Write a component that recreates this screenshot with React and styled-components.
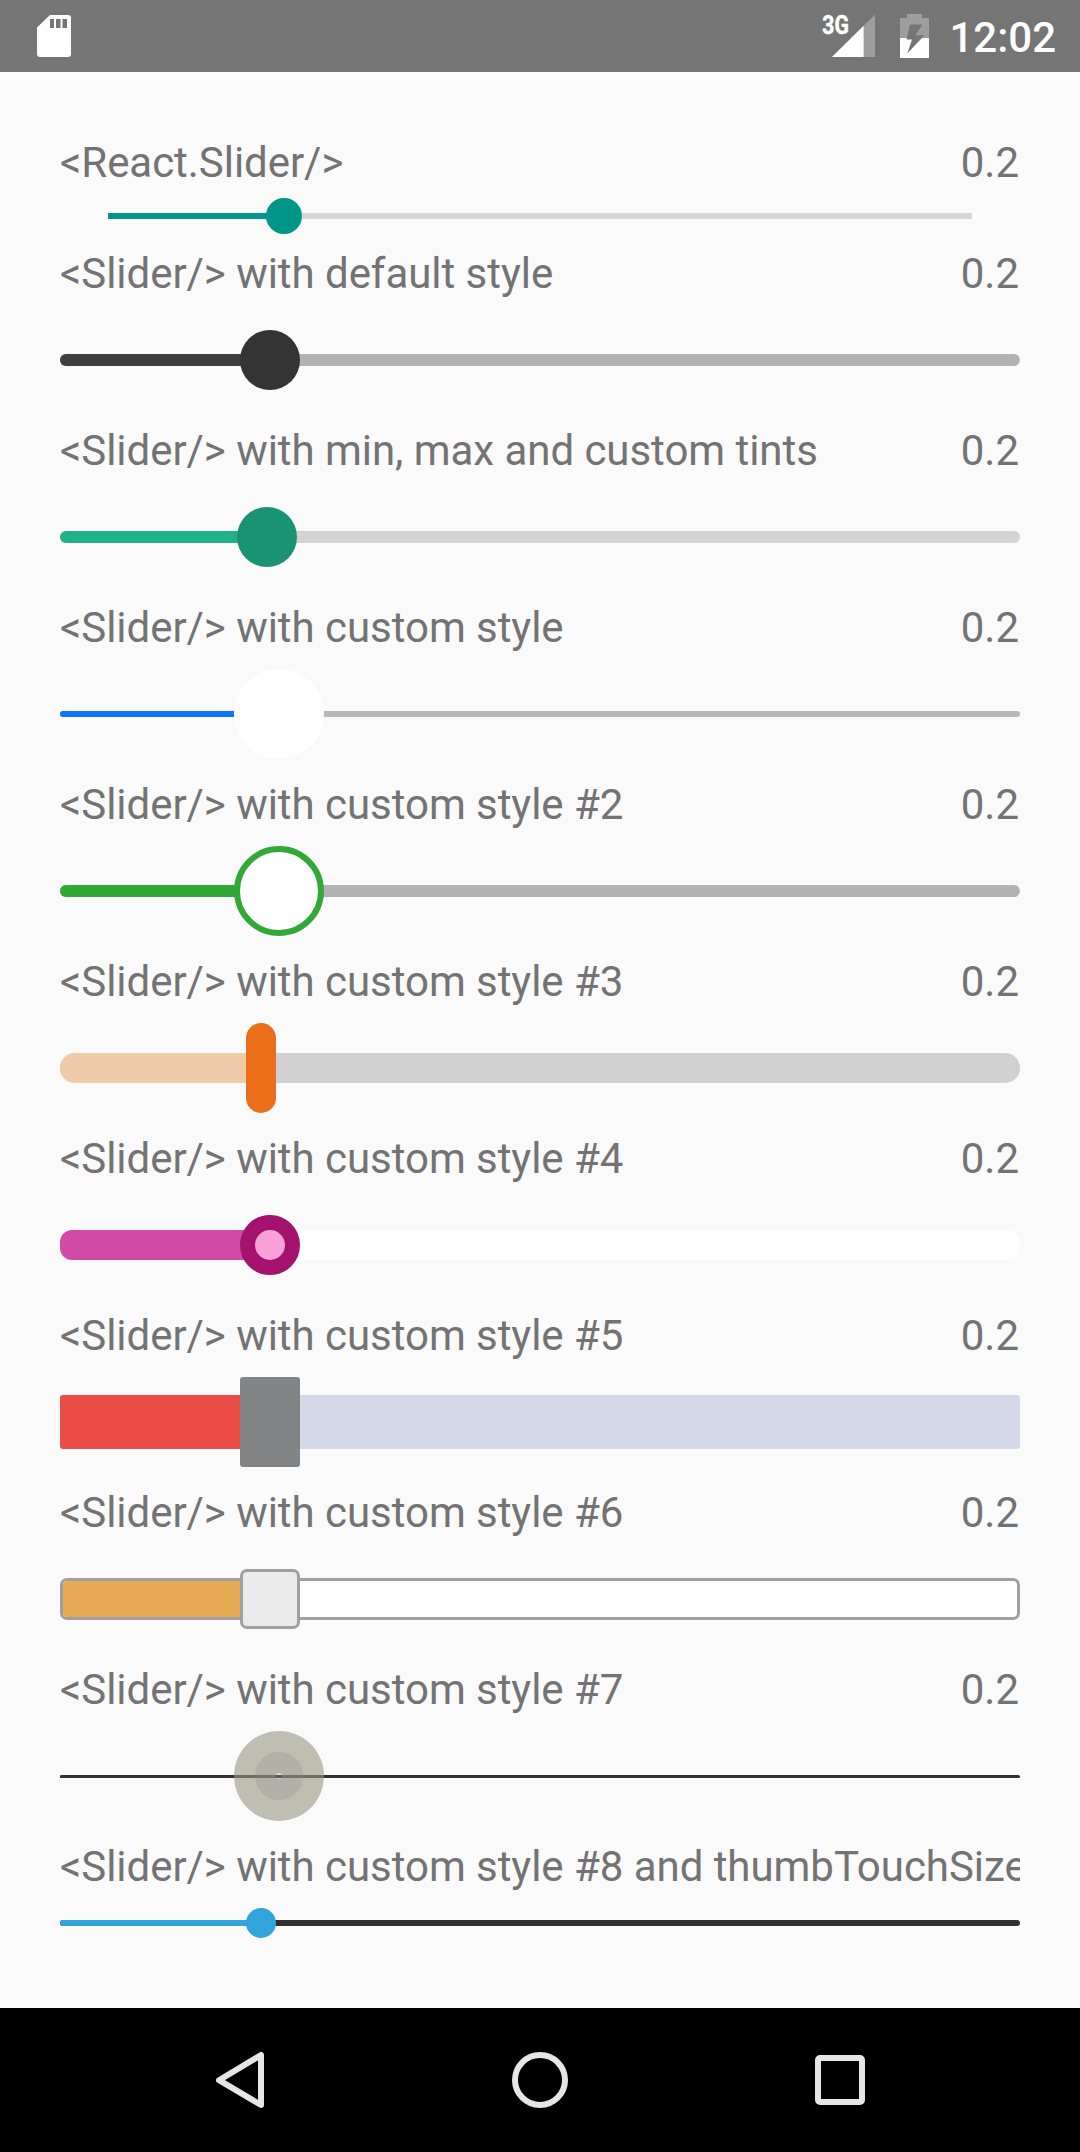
import React from 'react';
import styled, { createGlobalStyle } from 'styled-components';

const GlobalStyle = createGlobalStyle`
  *, *::before, *::after { box-sizing: border-box; }
  body {
    margin: 0;
    background: #fafafa;
    font-family: Roboto, 'Liberation Sans', sans-serif;
  }
`;

const Screen = styled.div`
  display: flex;
  flex-direction: column;
  width: 1080px;
  height: 2152px;
  background: #fafafa;
  overflow: hidden;
`;

const StatusBar = styled.header`
  display: flex;
  align-items: center;
  height: 72px;
  flex: none;
  padding: 0 24px 0 36px;
  background: #757575;
`;

const StatusIcon = styled.svg`
  display: block;
  flex: none;
  margin-left: ${(p) => p.$gap || 0}px;
`;

const StatusSpacer = styled.div`
  flex: 1;
`;

const Clock = styled.time`
  margin-left: 19.6px;
  color: #fff;
  font-size: 42px;
  font-weight: 500;
  line-height: 72px;
  padding-top: 4px;
`;

const Content = styled.main`
  display: flex;
  flex-direction: column;
  flex: 1;
  min-height: 0;
  padding: 60px 60px 0;
`;

const LabelRow = styled.div`
  display: flex;
  flex: none;
  justify-content: space-between;
  height: 57px;
  padding-top: 4px;
  overflow: hidden;
  color: #737373;
  font-size: 42px;
  line-height: 53px;
  white-space: nowrap;
`;

const Label = styled.span`
  flex: none;
  letter-spacing: -0.045px;
`;

const Value = styled.span`
  flex: none;
  margin-right: 1px;
`;

const SliderBox = styled.div`
  display: grid;
  grid-template-columns: 100%;
  flex: none;
  align-items: center;
  height: ${(p) => p.$height}px;
  padding: 0 ${(p) => p.$inset}px;

  > * { grid-area: 1 / 1; }
`;

const Track = styled.div`
  display: flex;
  height: ${(p) => p.$height}px;
  margin-top: ${(p) => p.$height % 2}px;
  border-radius: ${(p) => p.$radius}px;
  border: ${(p) => (p.$border ? `3px solid ${p.$border}` : 'none')};
  background: ${(p) => p.$color};
  overflow: hidden;
`;

const Fill = styled.div`
  width: ${(p) => p.$width}px;
  background: ${(p) => p.$color};
`;

const Thumb = styled.div`
  display: flex;
  align-items: center;
  justify-content: center;
  width: ${(p) => p.$width}px;
  height: ${(p) => p.$height}px;
  margin-left: ${(p) => p.$left}px;
  border-radius: ${(p) => p.$radius}px;
  border: ${(p) => (p.$border ? `${p.$borderWidth}px solid ${p.$border}` : 'none')};
  background: ${(p) => p.$color};
`;

const Dot = styled.div`
  display: flex;
  align-items: center;
  justify-content: center;
  width: ${(p) => p.$size}px;
  height: ${(p) => p.$size}px;
  border-radius: 50%;
  background: ${(p) => p.$color};
`;

const NavBar = styled.nav`
  display: flex;
  flex: none;
  align-items: center;
  justify-content: center;
  gap: 240px;
  height: 144px;
  background: #000;
`;

const NavIcon = styled.svg`
  display: block;
  width: 60px;
  height: 60px;
  fill: none;
  stroke: #e6e6e6;
  stroke-width: 6;
  stroke-linejoin: round;
`;

const pinhole = `linear-gradient(
  rgba(255, 255, 255, 0.55) 2px,
  rgba(60, 50, 85, 0.45) 2px 5px,
  rgba(255, 255, 255, 0.55) 5px
)`;

const sliders = [
  {
    label: '<React.Slider/>', height: 54, inset: 48,
    track: { height: 6, radius: 0, color: '#d7d7d7', fill: '#009688' },
    thumb: { left: 158, width: 36, height: 36, radius: 18, color: '#009688' },
  },
  {
    label: '<Slider/> with default style',
    track: { height: 12, radius: 6, color: '#b3b3b3', fill: '#3f3f3f' },
    thumb: { left: 180, width: 60, height: 60, radius: 30, color: '#343434' },
  },
  {
    label: '<Slider/> with min, max and custom tints',
    track: { height: 12, radius: 6, color: '#d3d3d3', fill: '#1fb28a' },
    thumb: { left: 177.2, width: 60, height: 60, radius: 30, color: '#1a9274' },
  },
  {
    label: '<Slider/> with custom style',
    track: { height: 6, radius: 3, color: '#b7b7b7', fill: '#1073ff' },
    thumb: { left: 174, width: 90, height: 90, radius: 45, color: '#fff' },
  },
  {
    label: '<Slider/> with custom style #2',
    track: { height: 12, radius: 6, color: '#b3b3b3', fill: '#31a937' },
    thumb: { left: 174, width: 90, height: 90, radius: 45, color: '#fff', border: '#31a937', borderWidth: 6 },
  },
  {
    label: '<Slider/> with custom style #3',
    track: { height: 30, radius: 15, color: '#d0d0d0', fill: '#eecba8' },
    thumb: { left: 186, width: 30, height: 90, radius: 15, color: '#eb6e1b' },
  },
  {
    label: '<Slider/> with custom style #4',
    track: { height: 30, radius: 12, color: '#fff', fill: '#d14ba6' },
    thumb: { left: 180, width: 60, height: 60, radius: 30, color: '#f8a1d6', border: '#a4126e', borderWidth: 15 },
  },
  {
    label: '<Slider/> with custom style #5',
    track: { height: 54, radius: 3, color: '#d5d8e8', fill: '#ec4c46' },
    thumb: { left: 180, width: 60, height: 90, radius: 3, color: '#838486' },
  },
  {
    label: '<Slider/> with custom style #6',
    track: { height: 42, radius: 7, color: '#fff', fill: '#e6a954', border: '#a0a0a0' },
    thumb: { left: 180, width: 60, height: 60, radius: 7, color: '#eaeaea', border: '#a0a0a0', borderWidth: 3 },
  },
  {
    label: '<Slider/> with custom style #7',
    track: { height: 3, radius: 1.5, color: '#303030', fill: '#303030' },
    thumb: {
      left: 174, width: 90, height: 90, radius: 45, color: 'rgba(150, 150, 128, 0.6)',
      dots: true,
    },
  },
  {
    label: '<Slider/> with custom style #8 and thumbTouchSize', height: 60,
    track: { height: 6, radius: 3, color: '#303030', fill: '#31a4db' },
    thumb: { left: 186, width: 30, height: 30, radius: 15, color: '#31a4db' },
  },
];

function Slider({ label, height = 120, inset = 0, track, thumb }) {
  const fillWidth = thumb.left + thumb.width / 2 - (track.border ? 3 : 0);
  return (
    <>
      <LabelRow>
        <Label>{label}</Label>
        <Value>0.2</Value>
      </LabelRow>
      <SliderBox $height={height} $inset={inset}>
        <Track $height={track.height} $radius={track.radius} $color={track.color} $border={track.border}>
          <Fill $width={fillWidth} $color={track.fill} />
        </Track>
        <Thumb
          $left={thumb.left}
          $width={thumb.width}
          $height={thumb.height}
          $radius={thumb.radius}
          $color={thumb.color}
          $border={thumb.border}
          $borderWidth={thumb.borderWidth}
        >
          {thumb.dots && (
            <Dot $size={48} $color="rgba(138, 138, 138, 0.25)">
              <Dot $size={6} $color={pinhole} />
            </Dot>
          )}
        </Thumb>
      </SliderBox>
    </>
  );
}

export default function App() {
  return (
    <>
      <GlobalStyle />
      <Screen>
        <StatusBar>
          <StatusIcon width="36" height="72" viewBox="36 0 36 72">
            <path fill="#fff" d="M50 15H68a3 3 0 0 1 3 3V54a3 3 0 0 1-3 3H40a3 3 0 0 1-3-3V27.500Z" />
            <path fill="#757575" d="M50 19h4v9h-4zM56 19h4.500v9H56zM62.500 19H67v9h-4.500z" />
          </StatusIcon>
          <StatusSpacer />
          <StatusIcon width="56" height="72" viewBox="820 0 56 72">
            <path fill="#9e9e9e" d="M831 57 874 14.500V57Z" />
            <path fill="#fff" d="M831 57 862.600 25.700V57Z" />
            <text x="821.300" y="33.500" fill="#fff" stroke="#fff" strokeWidth="0.500" fontFamily="Roboto" fontWeight="700" fontSize="25.500" textLength="26.500" lengthAdjust="spacingAndGlyphs">3G</text>
          </StatusIcon>
          <StatusIcon width="31" height="72" viewBox="898 0 31 72" $gap={22}>
            <path fill="#9e9e9e" d="M906 14h15v4h7v20h-29V18h7z" />
            <path fill="#fff" d="M899 38h29v20h-29z" />
            <path fill="#757575" d="M909 24.500h12.500l-7 10.800h9L906.300 53.500 911 39.500h-5.500z" />
          </StatusIcon>
          <Clock>12:02</Clock>
        </StatusBar>
        <Content>
          {sliders.map((s) => (
            <Slider key={s.label} {...s} />
          ))}
        </Content>
        <NavBar>
          <NavIcon viewBox="0 0 60 60">
            <path d="M51 5V55L9 30.200Z" />
          </NavIcon>
          <NavIcon viewBox="0 0 60 60">
            <circle cx="30" cy="30" r="25" />
          </NavIcon>
          <NavIcon viewBox="0 0 60 60">
            <rect x="8" y="8" width="44" height="44" rx="2" />
          </NavIcon>
        </NavBar>
      </Screen>
    </>
  );
}
